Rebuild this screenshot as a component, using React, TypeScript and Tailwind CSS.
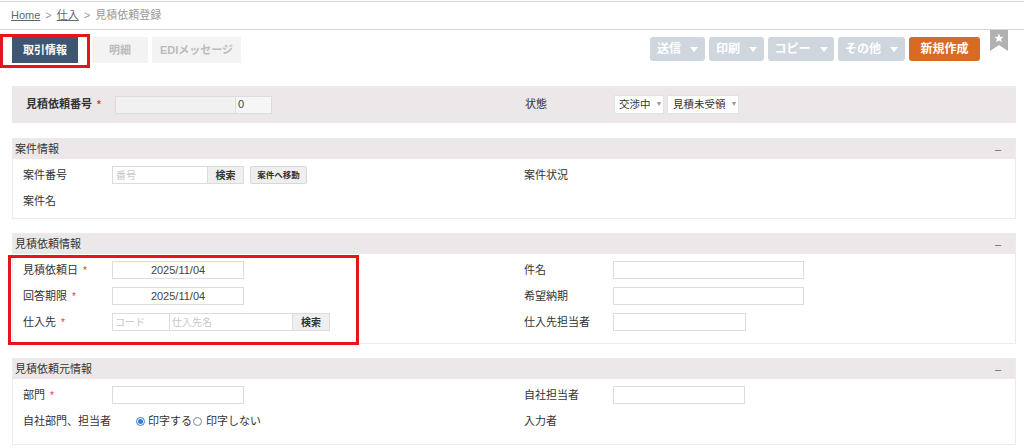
import React from 'react';

const Req = () => <span className="ml-[5px] text-[10px] text-[#e23b3b]">*</span>;

function Caret() {
  return (
    <svg width="8" height="5" viewBox="0 0 8 5" className="ml-[9px]">
      <polygon points="0,0 8,0 4,5" fill="#ffffff" />
    </svg>
  );
}

function ActionButton({ label, width }: { label: string; width: string }) {
  return (
    <div className={`h-[24px] ${width} rounded-[3px] bg-[#cfd6de] flex items-center justify-center text-white text-[12px] font-bold`}>
      {label}
      <Caret />
    </div>
  );
}

function Input({ width, children, center }: { width: string; children?: React.ReactNode; center?: boolean }) {
  return (
    <div className={`h-[18px] ${width} border border-[#dcdcdc] bg-white flex items-center ${center ? 'justify-center' : 'px-[3px]'} text-[11px] text-[#444]`}>
      {children}
    </div>
  );
}

function Row({ label, req, children }: { label: string; req?: boolean; children?: React.ReactNode }) {
  return (
    <div className="h-[26px] flex items-center">
      <div className="w-[99px] shrink-0 pl-[10px] flex items-center text-[11px] text-[#333]">
        {label}
        {req && <Req />}
      </div>
      {children}
    </div>
  );
}

function Panel({ title, children, pb = 'pb-[4px]' }: { title: string; children: React.ReactNode; pb?: string }) {
  return (
    <div className="ml-[12px] mr-[8px] border border-[#ebebeb] bg-white">
      <div className="h-[20px] bg-[#ece8e9] flex items-center justify-between pl-[2px] pr-[14px] text-[11px] text-[#333]">
        <span>{title}</span>
        <span className="text-[#666]">–</span>
      </div>
      <div className={`grid grid-cols-2 pt-[3px] ${pb}`}>{children}</div>
    </div>
  );
}

export default function App() {
  return (
    <div className="relative w-[1024px] h-[448px] overflow-hidden bg-white text-[#333] font-['Liberation_Sans','Noto_Sans_CJK_JP',sans-serif]">
      {/* breadcrumb */}
      <div className="mt-[1px] h-[29px] border-t border-b border-[#d4d4d4] flex items-center pl-[11px] text-[11px] text-[#999]">
        <span className="underline text-[#5a6a7a]">Home</span>
        <span className="mx-[5px]">&gt;</span>
        <span className="underline text-[#5a6a7a]">仕入</span>
        <span className="mx-[5px]">&gt;</span>
        <span>見積依頼登録</span>
      </div>

      {/* toolbar */}
      <div className="relative h-[56px] flex items-start pt-[7px]">
        <div className="flex items-start gap-[4px] ml-[12px]">
          <div className="h-[26px] w-[66px] bg-[#3f5672] text-white text-[11px] font-bold flex items-center justify-center">取引情報</div>
          <div className="ml-[10px] h-[26px] w-[56px] bg-[#f3f3f3] text-[#bbb] text-[11px] font-bold flex items-center justify-center">明細</div>
          <div className="h-[26px] w-[89px] bg-[#f3f3f3] text-[#bbb] text-[11px] font-bold flex items-center justify-center">EDIメッセージ</div>
        </div>
        <div className="ml-auto mr-[16px] flex items-start">
          <div className="flex gap-[4px]">
            <ActionButton label="送信" width="w-[55px]" />
            <ActionButton label="印刷" width="w-[55px]" />
            <ActionButton label="コピー" width="w-[66px]" />
            <ActionButton label="その他" width="w-[67px]" />
            <div className="h-[24px] w-[71px] rounded-[3px] bg-[#d96a22] text-white text-[12px] font-bold flex items-center justify-center">新規作成</div>
          </div>
          <svg width="18" height="21" viewBox="0 0 18 21" className="ml-[10px] -mt-[7px]">
            <polygon points="0,0 18,0 18,21 9,15 0,21" fill="#b1b1b1" />
            <polygon points="9,3.5 10.3,6.7 13.6,6.9 11,9 11.9,12.3 9,10.4 6.1,12.3 7,9 4.4,6.9 7.7,6.7" fill="#ffffff" />
          </svg>
        </div>
        {/* annotation */}
        <div className="absolute left-0 top-[4px] w-[90px] h-[34px] border-[3px] border-[#e8141b]" />
      </div>

      {/* header section */}
      <div className="ml-[12px] mr-[8px] h-[37px] bg-[#ece8e9] grid grid-cols-2">
        <div className="flex items-center">
          <div className="w-[103px] pl-[14px] flex items-center text-[11px] font-bold text-[#333]">
            見積依頼番号
            <Req />
          </div>
          <div className="h-[18px] w-[157px] border border-[#dcdcdc] flex">
            <div className="w-[120px] bg-[#f1f1f1] border-r border-[#dcdcdc]" />
            <div className="flex-1 bg-[#f6f6f6] pl-[2px] flex items-center text-[11px] text-[#444]">0</div>
          </div>
        </div>
        <div className="flex items-center">
          <div className="w-[100px] pl-[11px] text-[11px] text-[#333]">状態</div>
          <div className="flex gap-[3px]">
            <div className="h-[19px] w-[50px] whitespace-nowrap bg-white border border-[#e2e2e2] flex items-center pl-[4px] text-[10.5px] text-[#333]">
              交渉中<span className="ml-[5px] text-[7px] text-[#999]">▼</span>
            </div>
            <div className="h-[19px] w-[72px] whitespace-nowrap bg-white border border-[#e2e2e2] flex items-center pl-[5px] text-[10.5px] text-[#333]">
              見積未受領<span className="ml-[5px] text-[7px] text-[#999]">▼</span>
            </div>
          </div>
        </div>
      </div>

      <div className="h-[15px]" />

      <Panel title="案件情報">
        <div>
          <Row label="案件番号">
            <div className="h-[18px] w-[96px] border border-[#dcdcdc] bg-white flex items-center px-[3px] text-[10px] text-[#c8c8c8]">番号</div>
            <div className="h-[18px] w-[36px] bg-[#efefef] border border-[#dcdcdc] border-l-0 flex items-center justify-center text-[10px] font-bold text-[#333]">検索</div>
            <div className="ml-[6px] h-[18px] w-[57px] bg-[#efefef] border border-[#d8d8d8] rounded-[2px] flex items-center justify-center text-[8.5px] font-bold text-[#333]">案件へ移動</div>
          </Row>
          <Row label="案件名" />
        </div>
        <div>
          <Row label="案件状況" />
        </div>
      </Panel>

      <div className="h-[14px]" />

      <div className="relative">
        <Panel title="見積依頼情報" pb="pb-[8px]">
          <div>
            <Row label="見積依頼日" req>
              <Input width="w-[132px]" center>2025/11/04</Input>
            </Row>
            <Row label="回答期限" req>
              <Input width="w-[132px]" center>2025/11/04</Input>
            </Row>
            <Row label="仕入先" req>
              <div className="h-[18px] w-[58px] border border-[#dcdcdc] bg-white flex items-center px-[2px] text-[10px] text-[#c8c8c8]">コード</div>
              <div className="h-[18px] w-[123px] border border-[#dcdcdc] border-l-0 bg-white flex items-center px-[2px] text-[10px] text-[#c8c8c8]">仕入先名</div>
              <div className="h-[18px] w-[37px] bg-[#efefef] border border-[#dcdcdc] border-l-0 flex items-center justify-center text-[10px] font-bold text-[#333]">検索</div>
            </Row>
          </div>
          <div>
            <Row label="件名">
              <Input width="w-[191px]" />
            </Row>
            <Row label="希望納期">
              <Input width="w-[191px]" />
            </Row>
            <Row label="仕入先担当者">
              <Input width="w-[133px]" />
            </Row>
          </div>
        </Panel>
        {/* annotation */}
        <div className="absolute left-[8px] top-[22px] w-[351px] h-[90px] border-[3px] border-[#e8141b]" />
      </div>

      <div className="h-[14px]" />

      <Panel title="見積依頼元情報" pb="pb-[10px]">
        <div>
          <Row label="部門" req>
            <Input width="w-[132px]" />
          </Row>
          <div className="h-[26px] flex items-center">
            <div className="w-[123px] pl-[10px] text-[11px] text-[#333]">自社部門、担当者</div>
            <div className="flex items-center text-[11px] text-[#333]">
              <span className="w-[9px] h-[9px] rounded-full border border-[#2f7de1] flex items-center justify-center mr-[3px]">
                <span className="w-[5px] h-[5px] rounded-full bg-[#2f7de1]" />
              </span>
              印字する
              <span className="w-[9px] h-[9px] rounded-full border border-[#888] ml-[1px] mr-[4px]" />
              印字しない
            </div>
          </div>
        </div>
        <div>
          <Row label="自社担当者">
            <Input width="w-[132px]" />
          </Row>
          <Row label="入力者" />
        </div>
      </Panel>
    </div>
  );
}
